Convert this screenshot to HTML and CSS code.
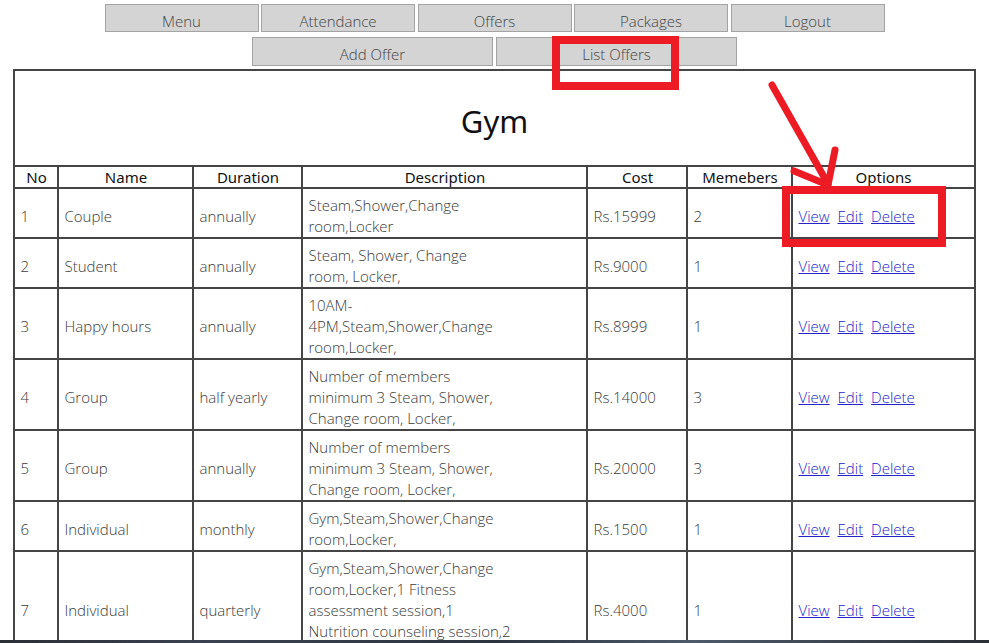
FILE: index.html
```html
<!DOCTYPE html>
<html>
<head>
<meta charset="utf-8">
<title>Gym - List Offers</title>
<link rel="stylesheet" href="styles.css">
</head>
<body>
<nav class="nav">
  <div class="nav-row">
    <a class="nav-btn" href="#">Menu</a>
    <a class="nav-btn" href="#">Attendance</a>
    <a class="nav-btn" href="#">Offers</a>
    <a class="nav-btn" href="#">Packages</a>
    <a class="nav-btn" href="#">Logout</a>
  </div>
  <div class="nav-row sub">
    <a class="nav-btn wide" href="#">Add Offer</a>
    <a class="nav-btn wide" href="#">List Offers</a>
  </div>
</nav>

<table class="offers">
  <colgroup>
    <col class="c-no"><col class="c-name"><col class="c-dur"><col class="c-desc"><col class="c-cost"><col class="c-mem"><col class="c-opt">
  </colgroup>
  <tr><th colspan="7" class="title">Gym</th></tr>
  <tr class="head">
    <th>No</th><th>Name</th><th>Duration</th><th>Description</th><th>Cost</th><th>Memebers</th><th>Options</th>
  </tr>
  <tr>
    <td>1</td><td>Couple</td><td>annually</td>
    <td>Steam,Shower,Change<br>room,Locker</td>
    <td>Rs.15999</td><td>2</td>
    <td class="opts"><a href="#">View</a> <a href="#">Edit</a> <a href="#">Delete</a></td>
  </tr>
  <tr>
    <td>2</td><td>Student</td><td>annually</td>
    <td>Steam, Shower, Change<br>room, Locker,</td>
    <td>Rs.9000</td><td>1</td>
    <td class="opts"><a href="#">View</a> <a href="#">Edit</a> <a href="#">Delete</a></td>
  </tr>
  <tr>
    <td>3</td><td>Happy hours</td><td>annually</td>
    <td>10AM-<br>4PM,Steam,Shower,Change<br>room,Locker,</td>
    <td>Rs.8999</td><td>1</td>
    <td class="opts"><a href="#">View</a> <a href="#">Edit</a> <a href="#">Delete</a></td>
  </tr>
  <tr>
    <td>4</td><td>Group</td><td>half yearly</td>
    <td>Number of members<br>minimum 3 Steam, Shower,<br>Change room, Locker,</td>
    <td>Rs.14000</td><td>3</td>
    <td class="opts"><a href="#">View</a> <a href="#">Edit</a> <a href="#">Delete</a></td>
  </tr>
  <tr>
    <td>5</td><td>Group</td><td>annually</td>
    <td>Number of members<br>minimum 3 Steam, Shower,<br>Change room, Locker,</td>
    <td>Rs.20000</td><td>3</td>
    <td class="opts"><a href="#">View</a> <a href="#">Edit</a> <a href="#">Delete</a></td>
  </tr>
  <tr>
    <td>6</td><td>Individual</td><td>monthly</td>
    <td>Gym,Steam,Shower,Change<br>room,Locker,</td>
    <td>Rs.1500</td><td>1</td>
    <td class="opts"><a href="#">View</a> <a href="#">Edit</a> <a href="#">Delete</a></td>
  </tr>
  <tr>
    <td>7</td><td>Individual</td><td>quarterly</td>
    <td>Gym,Steam,Shower,Change<br>room,Locker,1 Fitness<br>assessment session,1<br>Nutrition counseling session,2<br>Personal training sessions</td>
    <td>Rs.4000</td><td>1</td>
    <td class="opts"><a href="#">View</a> <a href="#">Edit</a> <a href="#">Delete</a></td>
  </tr>
</table>

<svg class="annot" width="989" height="643" viewBox="0 0 989 643">
  <rect x="556" y="40" width="119" height="46" fill="none" stroke="#ed1c24" stroke-width="8"/>
  <rect x="786" y="190" width="156" height="53" fill="none" stroke="#ed1c24" stroke-width="8"/>
  <path d="M772 85 L828 184" fill="none" stroke="#ed1c24" stroke-width="7" stroke-linecap="round"/>
  <path d="M794 171 L828 185 L835 150" fill="none" stroke="#ed1c24" stroke-width="7" stroke-linecap="round" stroke-linejoin="round"/>
</svg>
<div class="taskbar"></div>
</body>
</html>
```

FILE: styles.css
```css
html, body {
  margin: 0;
  padding: 0;
  background: #ffffff;
}

body {
  font-family: "Open Sans", "Noto Sans", sans-serif;
  font-weight: 300;
  color: #333;
  overflow: hidden;
  height: 643px;
}

.nav {
  display: flex;
  flex-direction: column;
  align-items: center;
  gap: 5px;
  padding-top: 4px;
}

.nav-row {
  display: flex;
  gap: 2.5px;
}

.nav-btn {
  display: block;
  width: 154px;
  height: 28px;
  box-sizing: border-box;
  border: 1px solid #a3a3a3;
  background: #d4d4d4;
  color: #444;
  text-decoration: none;
  text-align: center;
  font-size: 15px;
  line-height: 19px;
  padding-top: 7px;
}

.nav-row.sub {
  gap: 3px;
}

.nav-btn.wide {
  width: 241px;
  height: 29px;
  padding-top: 7px;
}

.offers {
  margin: 3px auto 0;
  width: 960px;
  table-layout: fixed;
  border-collapse: collapse;
  border: 2px solid #454545;
}

.c-no { width: 44px; }
.c-name { width: 135px; }
.c-dur { width: 109px; }
.c-desc { width: 285px; }
.c-cost { width: 100px; }
.c-mem { width: 105px; }
.c-opt { width: 182px; }

.offers th,
.offers td {
  border: 2px solid #454545;
}

.offers th.title {
  height: 96px;
  font-family: "Noto Sans", sans-serif;
  font-weight: 400;
  font-size: 31px;
  color: #111;
  padding: 6px 0 0;
  box-sizing: border-box;
}

.head th {
  font-family: "Noto Sans", sans-serif;
  font-weight: 400;
  font-size: 15px;
  color: #111;
  line-height: 19px;
  padding: 1px 2px 0;
}

.offers td {
  font-size: 15px;
  line-height: 21px;
  padding: 6px 5px 0;
  vertical-align: middle;
  text-align: left;
  color: #3a3a3a;
  white-space: nowrap;
  overflow: hidden;
}

.opts a {
  color: #2323c8;
  text-decoration: underline;
  margin-right: 4px;
}

.annot {
  position: absolute;
  top: 0;
  left: 0;
  pointer-events: none;
}

.taskbar {
  position: fixed;
  left: 0;
  right: 0;
  bottom: 0;
  height: 3px;
  background: linear-gradient(90deg, #2b2f36 0%, #3a4150 20%, #2c3440 50%, #4d5a6a 70%, #2b2f36 100%);
}
```
